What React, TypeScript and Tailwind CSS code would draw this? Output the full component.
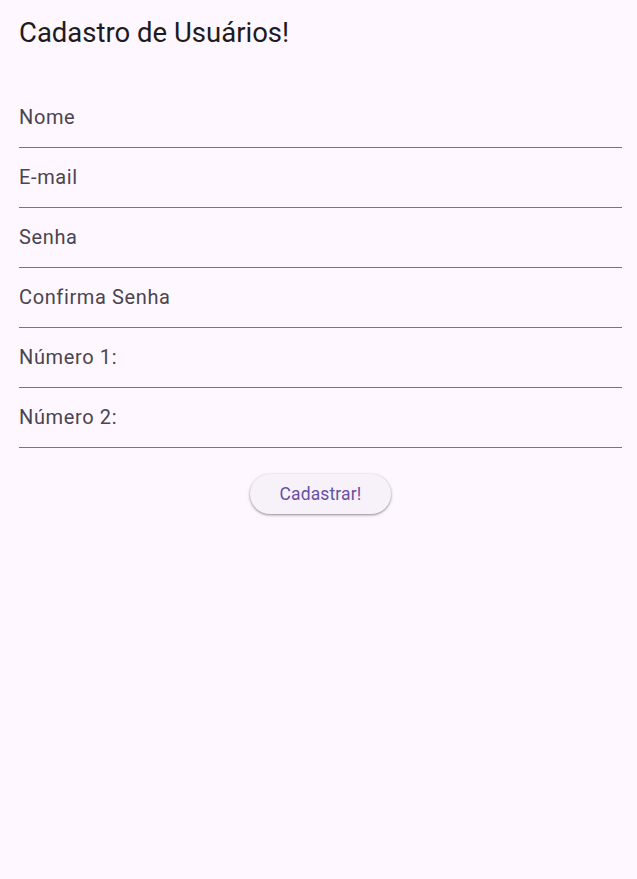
const fields = ["Nome", "E-mail", "Senha", "Confirma Senha", "Número 1:", "Número 2:"];

export default function App() {
  return (
    <div className="min-h-[879px] w-full bg-[#fef7ff] font-['Roboto',sans-serif]">
      <div className="pl-[19px] pr-[15px] pt-[15px]">
        <h1 className="h-9 text-[27.5px] leading-9 text-[#1d1b20]">Cadastro de Usuários!</h1>
        <form className="mt-[37px] flex flex-col">
          {fields.map((label) => (
            <div
              key={label}
              className="flex h-[60px] items-center border-b border-[#79747e] pb-px text-[20px] tracking-[0.625px] text-[#49454f]"
            >
              {label}
            </div>
          ))}
          <div className="mt-[26px] flex justify-center">
            <button
              type="button"
              className="h-10 w-[141px] rounded-full bg-[#f7f2fa] text-[17.5px] tracking-[0.125px] text-[#6750a4] shadow-[0_1px_2px_rgba(0,0,0,0.3),0_1px_3px_1px_rgba(0,0,0,0.12)]"
            >
              Cadastrar!
            </button>
          </div>
        </form>
      </div>
    </div>
  );
}
